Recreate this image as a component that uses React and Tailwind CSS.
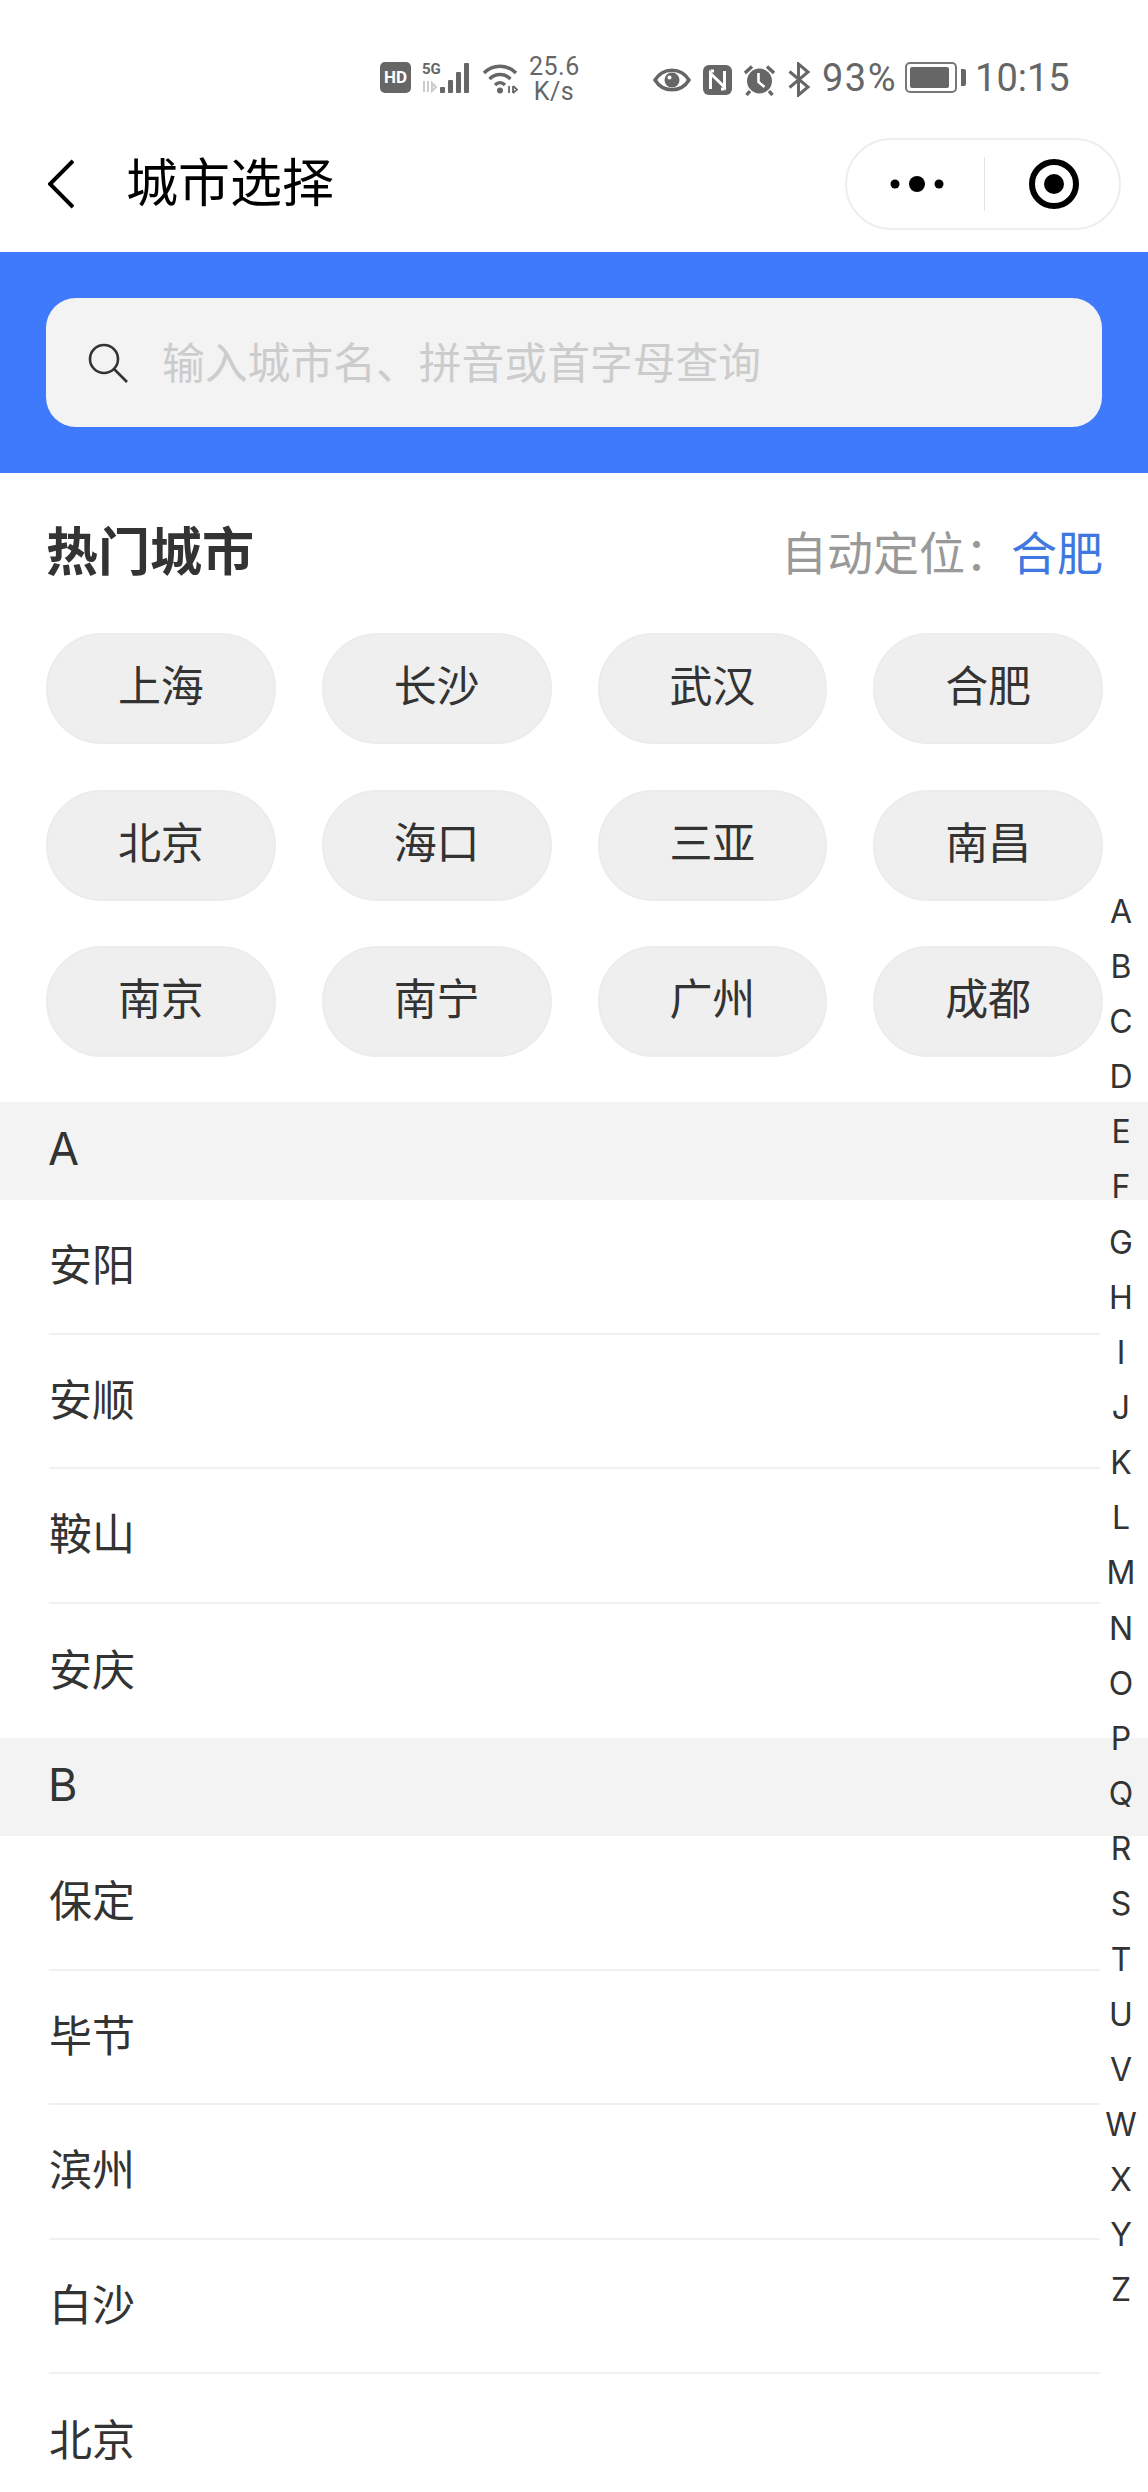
import React from 'react'

const hotCities = ['上海', '长沙', '武汉', '合肥', '北京', '海口', '三亚', '南昌', '南京', '南宁', '广州', '成都']
const groups = [
  { letter: 'A', cities: ['安阳', '安顺', '鞍山', '安庆'] },
  { letter: 'B', cities: ['保定', '毕节', '滨州', '白沙', '北京'] },
]
const letters = 'ABCDEFGHIJKLMNOPQRSTUVWXYZ'.split('')

function StatusIcons() {
  return (
    <>
      <div className="flex h-[31px] w-[31px] items-center justify-center rounded-[5px] bg-[#666] font-['Roboto'] text-[17px] leading-none font-bold text-white">HD</div>
      <div className="relative ml-[11px] h-[32px] w-[52px]">
        <div className="absolute top-[0px] left-0 font-['Roboto'] text-[15px] leading-[15px] font-bold text-[#666]">5G</div>
        <svg width="52" height="32" viewBox="0 0 52 32">
          <path d="M2 19v11M6 19v11M10 21l4 4-4 4z" stroke="#ccc" strokeWidth="2" fill="none" />
          <rect x="18" y="25" width="5" height="6" rx="1" fill="#666" />
          <rect x="26" y="18" width="5" height="13" rx="1" fill="#666" />
          <rect x="34" y="10" width="5" height="21" rx="1" fill="#666" />
          <rect x="42" y="1" width="5" height="30" rx="1" fill="#666" />
        </svg>
      </div>
      <svg width="38" height="32" viewBox="0 0 38 32" className="ml-[8px]">
        <path d="M2 11C11 2 25 2 34 11M7.5 17C13.5 11 22.5 11 28.5 17M13 23C16 20 20 20 23 23" stroke="#666" strokeWidth="3.4" fill="none" />
        <circle cx="18" cy="28.5" r="3" fill="#666" />
        <path d="M27 24v7M31 24v7M31 24l4 3.5-4 3.5" stroke="#666" strokeWidth="1.8" fill="none" />
      </svg>
    </>
  )
}

function StatusRight() {
  return (
    <>
      <svg width="38" height="28" viewBox="0 0 38 28">
        <path d="M2 14C10 1 28 1 36 14C28 27 10 27 2 14Z" stroke="#666" strokeWidth="3.5" fill="none" />
        <circle cx="19" cy="14" r="7.5" fill="#666" />
        <circle cx="16.5" cy="11.5" r="2" fill="#fff" />
      </svg>
      <svg width="29" height="30" viewBox="0 0 29 30" className="ml-[12px]">
        <rect width="29" height="30" rx="6" fill="#666" />
        <path d="M7.500 24V8.500L21.500 22V6" stroke="#fff" strokeWidth="3" fill="none" />
        <path d="M7.500 6H11M21.500 24H18" stroke="#fff" strokeWidth="3" fill="none" />
      </svg>
      <svg width="31" height="32" viewBox="0 0 31 32" className="ml-[12px]">
        <circle cx="15.500" cy="17" r="12.500" fill="#666" />
        <path d="M14.500 9v9l6 5" stroke="#fff" strokeWidth="2.6" fill="none" />
        <path d="M1 9L8 2.500M30 9L23 2.500M6 27l-3.500 4M25 27l3.500 4" stroke="#666" strokeWidth="3.4" fill="none" />
      </svg>
      <svg width="23" height="35" viewBox="0 0 23 35" className="ml-[13px]">
        <path d="M1.500 9.500L20 25L10.500 33V2L20 10L1.500 25.500" stroke="#666" strokeWidth="3" fill="none" />
      </svg>
    </>
  )
}

function Battery() {
  return (
    <div className="ml-[8px] flex items-center">
      <div className="h-[31px] w-[52px] rounded-[5px] border-[2.5px] border-[#777] p-[3px]">
        <div className="h-full w-[39px] rounded-[2px] bg-[#666]" />
      </div>
      <div className="ml-[4px] h-[17px] w-[5px] rounded-r-[2px] bg-[#666]" />
    </div>
  )
}

function Capsule() {
  return (
    <div className="flex h-[92px] w-[276px] items-center rounded-full border-2 border-[#eeeeee] bg-white">
      <div className="flex w-[137px] items-center justify-center pl-[2px]">
        <svg width="54" height="16" viewBox="0 0 54 16">
          <circle cx="5" cy="8" r="4.500" fill="#000" />
          <circle cx="27" cy="8" r="8" fill="#000" />
          <circle cx="49" cy="8" r="4.500" fill="#000" />
        </svg>
      </div>
      <div className="h-[54px] w-px bg-[#e5e5e5]" />
      <div className="flex flex-1 items-center justify-center pl-[4px]">
        <svg width="50" height="50" viewBox="0 0 50 50">
          <circle cx="25" cy="25" r="22" stroke="#000" strokeWidth="6" fill="none" />
          <circle cx="25" cy="25" r="10" fill="#000" />
        </svg>
      </div>
    </div>
  )
}

export default function App() {
  return (
    <div className="relative h-[2492px] w-[1148px] overflow-hidden bg-white font-['Inter','Noto_Sans_CJK_SC',sans-serif] text-[#333]">
      {/* status bar */}
      <div className="flex h-[138px] items-start pt-[62px] pl-[380px] text-[#666]">
        <StatusIcons />
        <div className="mt-[-8px] ml-[9px] w-[50px] text-center font-['Roboto'] text-[25px] leading-[25px] tracking-[0.5px]">
          <div>25.6</div>
          <div>K/s</div>
        </div>
        <div className="ml-[74px] flex items-center">
          <StatusRight />
        </div>
        <div className="mt-[-9px] ml-[11px] font-['Roboto'] text-[38px] leading-[50px] tracking-[1.500px]">93%</div>
        <Battery />
        <div className="mt-[-9px] ml-[9px] font-['Roboto'] text-[38px] leading-[50px]">10:15</div>
      </div>

      {/* nav */}
      <div className="flex h-[114px] items-start">
        <svg width="26" height="50" viewBox="0 0 26 50" className="mt-[21px] ml-[48px]">
          <path d="M25 2L2 25L25 48" stroke="#000" strokeWidth="4" fill="none" />
        </svg>
        <div className="mt-[11px] ml-[52px] text-[52px] leading-[70px] text-black">城市选择</div>
        <div className="ml-auto mr-[27px]">
          <Capsule />
        </div>
      </div>

      {/* search */}
      <div className="bg-[#3e7afb] px-[46px] pt-[46px] pb-[46px]">
        <div className="flex h-[129px] items-center rounded-[30px] bg-[#f3f3f3] pl-[42px]">
          <svg width="40" height="40" viewBox="0 0 40 40">
            <circle cx="16" cy="16" r="14" stroke="#333" strokeWidth="2.600" fill="none" />
            <path d="M26 26L39 39" stroke="#333" strokeWidth="2.600" />
          </svg>
          <div className="ml-[34px] pt-[3px] text-[42.800px] text-[#cccccc]">输入城市名、拼音或首字母查询</div>
        </div>
      </div>

      {/* hot cities */}
      <div className="pr-[45px] pl-[46px]">
        <div className="flex h-[160px] items-center justify-between">
          <div className="text-[52px] font-bold">热门城市</div>
          <div className="text-[46px] text-[#999]">
            自动定位：<span className="text-[#3f78e0]">合肥</span>
          </div>
        </div>
        <div className="grid grid-cols-4 gap-x-[46px] gap-y-[45.500px] pb-[45px]">
          {hotCities.map((c) => (
            <div key={c} className="flex h-[111px] items-center justify-center rounded-full border-2 border-[#ececec] bg-[#efefef] pb-[4px] text-[43px]">
              {c}
            </div>
          ))}
        </div>
      </div>

      {/* city list */}
      {groups.map((g) => (
        <div key={g.letter}>
          <div className="flex h-[98px] items-center bg-[#f3f3f3] pb-[4px] pl-[48px] text-[45px]">{g.letter}</div>
          {g.cities.map((c) => (
            <div key={c} className="ml-[49px] mr-[48px] flex h-[134.500px] items-center border-b-2 border-[#f0f0f0] pb-[2px] text-[43px] last:border-b-0">
              {c}
            </div>
          ))}
        </div>
      ))}

      {/* letter index */}
      <div className="absolute top-[884px] right-0 w-[54px] text-center text-[32px]">
        {letters.map((l) => (
          <div key={l} className="flex h-[55.170px] items-center justify-center">{l}</div>
        ))}
      </div>
    </div>
  )
}
